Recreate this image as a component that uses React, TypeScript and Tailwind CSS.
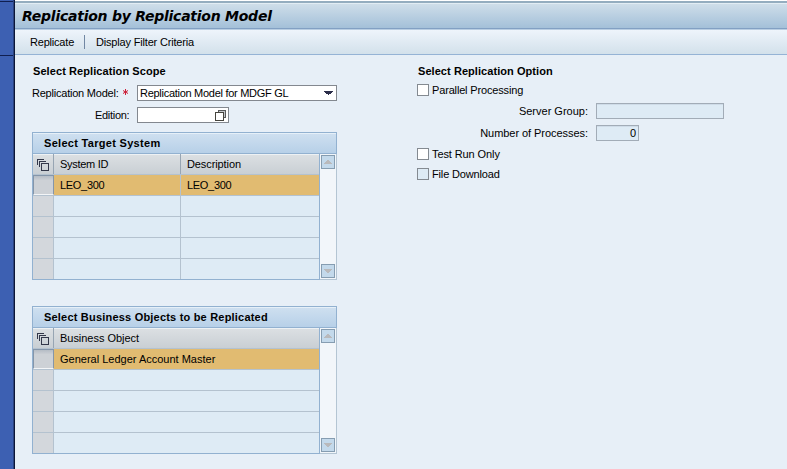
import React from "react";

const HeaderIcon = () => (
  <svg width="13" height="13" viewBox="0 0 13 13" shapeRendering="crispEdges" fill="none" stroke="#33384a">
    <path d="M0.5 6V0.5H7" />
    <path d="M2.5 8V2.5H9" />
    <rect x="4.5" y="4.5" width="7" height="7" />
  </svg>
);

const ScrollButton = ({ down = false }: { down?: boolean }) => (
  <div className="flex h-[14px] w-[14px] items-center justify-center border border-[#869db1] bg-[#c3d9eb]">
    <svg width="8" height="4" viewBox="0 0 8 4" shapeRendering="crispEdges" fill="#b9b9bb">
      <path d={down ? "M0 0h8v1H7v1H6v1H5v1H3V3H2V2H1V1H0z" : "M0 4h8V3H7V2H6V1H5V0H3v1H2v1H1v1H0z"} />
    </svg>
  </div>
);

type TableProps = {
  title: string;
  titleClass: string;
  columns: { label: string; value: string; width: string; labelClass: string; valueClass: string }[];
};

const Table = ({ title, titleClass, columns }: TableProps) => (
  <section className="h-[148px] w-[305px]">
    <h2 className="flex h-[22px] items-center border border-[#92b1d0] bg-linear-to-b from-[#cfe0f0] to-[#b7d0e8] pl-[11px] shadow-[inset_0_1px_0_#e6f0f8]">
      <span className={`whitespace-nowrap font-bold ${titleClass}`}>{title}</span>
    </h2>
    <div className="flex h-[126px]">
      <div className="w-[288px] border-b border-l border-r border-[#92b1d0] bg-[#deebf5]">
        <div className="flex h-[21px] border-b border-[#b4c2cf] bg-linear-to-b from-[#dce0e3] to-[#c9cfd4] shadow-[inset_0_1px_0_#edf1f4]">
          <div className="w-[21px] border-r border-[#97a5b3] pt-[5px] pl-1">
            <HeaderIcon />
          </div>
          {columns.map((c) => (
            <div key={c.label} className={`flex items-center border-[#97a5b3] pl-[6px] not-last:border-r ${c.width}`}>
              <span className={`whitespace-nowrap ${c.labelClass}`}>{c.label}</span>
            </div>
          ))}
        </div>
        {[0, 1, 2, 3, 4].map((row) => (
          <div key={row} className="flex h-[21px] border-b border-[#b4c2cf] last:h-5 last:border-b-0">
            {row === 0 ? (
              <div className="w-[21px] border-t border-r border-l border-[#8596aa] border-b border-b-[#f3f5f7] bg-linear-to-b from-[#b5bcc5] via-[#cdd1d6] via-25% to-[#cdd1d6]" />
            ) : (
              <div className="w-[21px] border-r border-[#b4c2cf] bg-[#d3d7dc]" />
            )}
            {columns.map((c) => (
              <div
                key={c.label}
                className={`flex items-center border-[#b4c2cf] pl-[6px] not-last:border-r ${c.width} ${row === 0 ? "bg-[#e1bb71]" : ""}`}
              >
                {row === 0 && <span className={`whitespace-nowrap ${c.valueClass}`}>{c.value}</span>}
              </div>
            ))}
          </div>
        ))}
      </div>
      <div className="flex w-[17px] flex-col justify-between border-r border-b border-[#b4c5d3] bg-[#f2f6fa] py-px pl-px">
        <ScrollButton />
        <ScrollButton down />
      </div>
    </div>
  </section>
);

const Check = ({ label, disabled = false, labelClass }: { label: string; disabled?: boolean; labelClass: string }) => (
  <label className="flex h-[12px] items-center gap-[3px]">
    <span className={`h-3 w-3 border border-[#848a91] ${disabled ? "bg-[#deebf5]" : "bg-white"}`} />
    <span className={`whitespace-nowrap ${labelClass}`}>{label}</span>
  </label>
);

export default function App() {
  return (
    <div className="flex h-[469px] w-[787px] overflow-hidden bg-[#e7eff7] font-['Liberation_Sans',Arial,sans-serif] text-[11px] leading-[14px] text-black">
      <aside className="flex w-[15px] shrink-0 flex-col border-r border-[#0c1638] bg-[#3d60b2]">
        <div className="mt-px h-px bg-[#101f50]" />
        <div className="mt-[53px] h-px bg-[#101f50]" />
        <div className="-mt-[56px] h-[469px] w-px shrink-0 self-end bg-[#2a437f]" />
      </aside>
      <main className="w-[772px]">
        <div className="h-px bg-white" />
        <header className="flex h-[29px] items-center border-t-2 border-b border-t-[#94adbf] border-b-[#b9cee2] bg-linear-to-b from-[#d0dfea] to-[#a2bfd8] pl-[7px] shadow-[inset_0_1px_0_#e2edf4,inset_0_-1px_0_#82a0c3]">
          <h1 className="whitespace-nowrap font-['DejaVu_Sans',Verdana,sans-serif] text-[14px] font-bold tracking-[-0.25px] italic">
            Replication by Replication Model
          </h1>
        </header>
        <nav className="flex h-[25px] items-center border-b border-[#95b3d5] bg-linear-to-b from-[#eef4fb] to-[#d3e1eb] pl-[15px]">
          <span className="w-[54px] whitespace-nowrap tracking-[-0.2px]">Replicate</span>
          <i className="mr-[11px] h-[14px] w-px bg-[#7187a3]" />
          <span className="whitespace-nowrap tracking-[-0.18px]">Display Filter Criteria</span>
        </nav>
        <div className="flex pl-[17px]">
          <div className="w-[385px]">
            <h2 className="mt-[9px] h-[14px] pl-px font-bold tracking-[0.08px] whitespace-nowrap">Select Replication Scope</h2>
            <div className="mt-[7px] flex h-4 items-center">
              <span className="w-[87px] whitespace-nowrap tracking-[-0.22px]">Replication Model:</span>
              <span className="flex h-4 w-[18px] pt-1 pl-[3px]">
                <svg width="7" height="6" viewBox="0 0 7 6" fill="none" stroke="#cc2038">
                  <path d="M3.5 0v6M1 1.5l5 3M6 1.5L1 4.5" />
                </svg>
              </span>
              <div className="flex h-4 w-[200px] items-center justify-between border border-[#83888f] bg-white pr-[3px] pl-[2px]">
                <span className="whitespace-nowrap tracking-[-0.28px]">Replication Model for MDGF GL</span>
                <svg width="9" height="4" viewBox="0 0 9 4" shapeRendering="crispEdges" fill="#2b2d4a">
                  <path d="M0 0h9v1H8v1H7v1H5v1H4V3H2V2H1V1H0z" />
                </svg>
              </div>
            </div>
            <div className="mt-[6px] flex h-4 items-center">
              <span className="w-[105px] pl-[63px] tracking-[-0.3px]">Edition:</span>
              <div className="flex h-4 w-[92px] items-center justify-end border border-[#83888f] bg-white pr-[2px]">
                <svg width="11" height="11" viewBox="0 0 11 11" shapeRendering="crispEdges" stroke="#45433d">
                  <rect x="3.5" y="0.5" width="7" height="7" fill="#c3c7cb" stroke="#58595a" />
                  <rect x="0.5" y="2.5" width="8" height="8" fill="white" />
                </svg>
              </div>
            </div>
            <div className="mt-[9px]">
              <Table
                title="Select Target System"
                titleClass="tracking-[0.3px]"
                columns={[
                  {
                    label: "System ID",
                    value: "LEO_300",
                    width: "w-[127px]",
                    labelClass: "tracking-[-0.3px]",
                    valueClass: "tracking-[-0.3px]",
                  },
                  {
                    label: "Description",
                    value: "LEO_300",
                    width: "w-[138px]",
                    labelClass: "tracking-[-0.1px]",
                    valueClass: "tracking-[-0.3px]",
                  },
                ]}
              />
            </div>
            <div className="mt-[26px]">
              <Table
                title="Select Business Objects to be Replicated"
                titleClass="tracking-[0.2px]"
                columns={[
                  {
                    label: "Business Object",
                    value: "General Ledger Account Master",
                    width: "w-[265px]",
                    labelClass: "tracking-[-0.03px]",
                    valueClass: "tracking-normal",
                  },
                ]}
              />
            </div>
          </div>
          <div className="w-[322px]">
            <h2 className="mt-[9px] h-[14px] pl-px font-bold tracking-[0.06px] whitespace-nowrap">Select Replication Option</h2>
            <div className="mt-[6px]">
              <Check label="Parallel Processing" labelClass="tracking-[-0.16px]" />
            </div>
            <div className="mt-[7px] flex h-4 items-center">
              <span className="w-[179px] pr-[8px] text-right">Server Group:</span>
              <div className="h-4 w-[128px] border border-[#a2acb7] bg-[#deebf5] shadow-[inset_0_1px_0_#cfdce8]" />
            </div>
            <div className="mt-[6px] flex h-4 items-center">
              <span className="w-[179px] pr-[8px] text-right tracking-[-0.05px]">Number of Processes:</span>
              <div className="flex h-4 w-[43px] items-center justify-end border border-[#a2acb7] bg-[#deebf5] pr-[2px] shadow-[inset_0_1px_0_#cfdce8]">
                0
              </div>
            </div>
            <div className="mt-[7px] flex flex-col gap-2">
              <Check label="Test Run Only" labelClass="tracking-[-0.1px]" />
              <Check label="File Download" disabled labelClass="tracking-[-0.15px]" />
            </div>
          </div>
        </div>
      </main>
    </div>
  );
}
